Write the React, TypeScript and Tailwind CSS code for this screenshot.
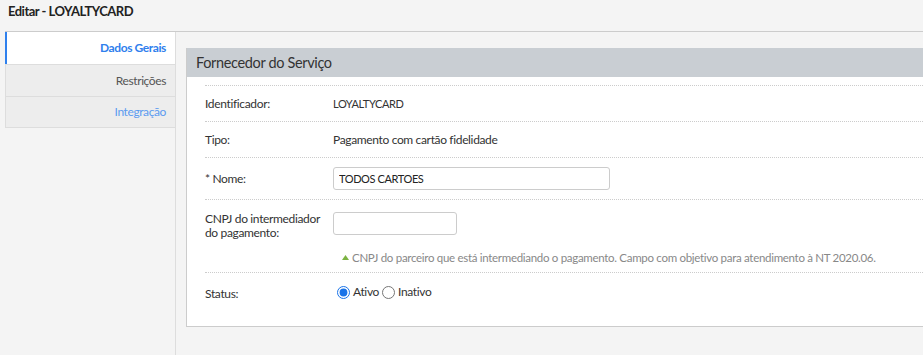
import React from 'react';

const tabs = [
    { label: 'Dados Gerais', active: true },
    { label: 'Restrições', active: false },
    { label: 'Integração', active: false },
];

const Row: React.FC<{ label: React.ReactNode; className?: string; children: React.ReactNode }> = ({
    label,
    className = '',
    children,
}) => (
    <div className={`flex border-t border-dotted border-[#ccc] ${className}`}>
        <div className="w-[128px] shrink-0 text-[12px] text-[#333] leading-[14px] tracking-[-0.35px]">{label}</div>
        <div className="flex-1 text-[12px] text-[#333] tracking-[-0.35px]">{children}</div>
    </div>
);

export default function App() {
    return (
        <div className="w-[923px] h-[355px] overflow-hidden bg-[#f4f4f4] font-['Lato',sans-serif]">
            {/* Page title */}
            <div className="h-[31px] pl-[8px] pt-[2px] text-[13px] font-bold text-[#222] tracking-[-0.5px]">
                Editar - LOYALTYCARD
            </div>

            <div className="flex h-[324px] ml-[5px] border-t border-[#ccc]">
                {/* Side tabs */}
                <div className="w-[171px] shrink-0 border-r border-[#ddd]">
                    {tabs.map((t, i) => (
                        <div
                            key={t.label}
                            className={
                                t.active
                                    ? 'h-[32px] flex items-center justify-end pr-[9px] bg-white border-l-2 border-[#2f80ed] text-[12px] font-bold text-[#2f80ed] tracking-[-0.4px]'
                                    : `h-[32px] flex items-center justify-end pr-[9px] bg-[#ededed] border-t border-[#ddd] border-l border-l-[#ddd] text-[12px] tracking-[-0.4px] ${
                                          i === 1 ? 'text-[#555]' : 'text-[#5b9bf0]'
                                      } ${i === tabs.length - 1 ? 'border-b' : ''}`
                            }
                        >
                            {t.label}
                        </div>
                    ))}
                </div>

                {/* Content */}
                <div className="flex-1 pl-[10px] pt-[16px]">
                    <div className="border-l border-b border-[#ccc] bg-white">
                        <div className="h-[29px] flex items-center pl-[9px] bg-[#c9ced3] text-[14.5px] text-[#333] tracking-[-0.35px]">
                            Fornecedor do Serviço
                        </div>
                        <div className="pl-[18px] pt-[8px] pb-[12px]">
                            <Row label="Identificador:" className="h-[36px] items-center">
                                <span className="text-[11px] tracking-[-0.4px]">LOYALTYCARD</span>
                            </Row>
                            <Row label="Tipo:" className="h-[36px] items-center">
                                Pagamento com cartão fidelidade
                            </Row>
                            <Row label="* Nome:" className="h-[42px] items-center">
                                <input
                                    defaultValue="TODOS CARTOES"
                                    className="w-[277px] h-[23px] px-[5px] border border-[#ccc] rounded-[3px] text-[11px] tracking-[-0.4px] text-[#222] outline-none"
                                />
                            </Row>
                            <Row
                                label={
                                    <span className="block pt-[12px]">
                                        CNPJ do intermediador
                                        <br />
                                        do pagamento:
                                    </span>
                                }
                                className="h-[73px]"
                            >
                                <div className="pt-[12px]">
                                    <input className="w-[124px] h-[23px] px-[5px] border border-[#ccc] rounded-[3px] text-[12px] outline-none" />
                                    <div className="mt-[14px] pl-[9px] flex items-center gap-[3px] whitespace-nowrap text-[11.5px] text-[#888] tracking-[-0.3px]">
                                        <svg width="7" height="5" viewBox="0 0 7 5">
                                            <path d="M3.5 0L7 5H0z" fill="#7cb342" />
                                        </svg>
                                        CNPJ do parceiro que está intermediando o pagamento. Campo com objetivo para atendimento à NT 2020.06.
                                    </div>
                                </div>
                            </Row>
                            <Row label="Status:" className="h-[42px] items-center">
                                <label className="inline-flex items-center gap-[3px]">
                                    <input type="radio" name="status" defaultChecked className="m-0 ml-[4px] w-[13px] h-[13px] accent-[#1a73e8]" />
                                    Ativo
                                </label>
                                <label className="inline-flex items-center gap-[3px] ml-[3px]">
                                    <input type="radio" name="status" className="m-0 w-[13px] h-[13px]" />
                                    Inativo
                                </label>
                            </Row>
                        </div>
                    </div>
                </div>
            </div>
        </div>
    );
}
